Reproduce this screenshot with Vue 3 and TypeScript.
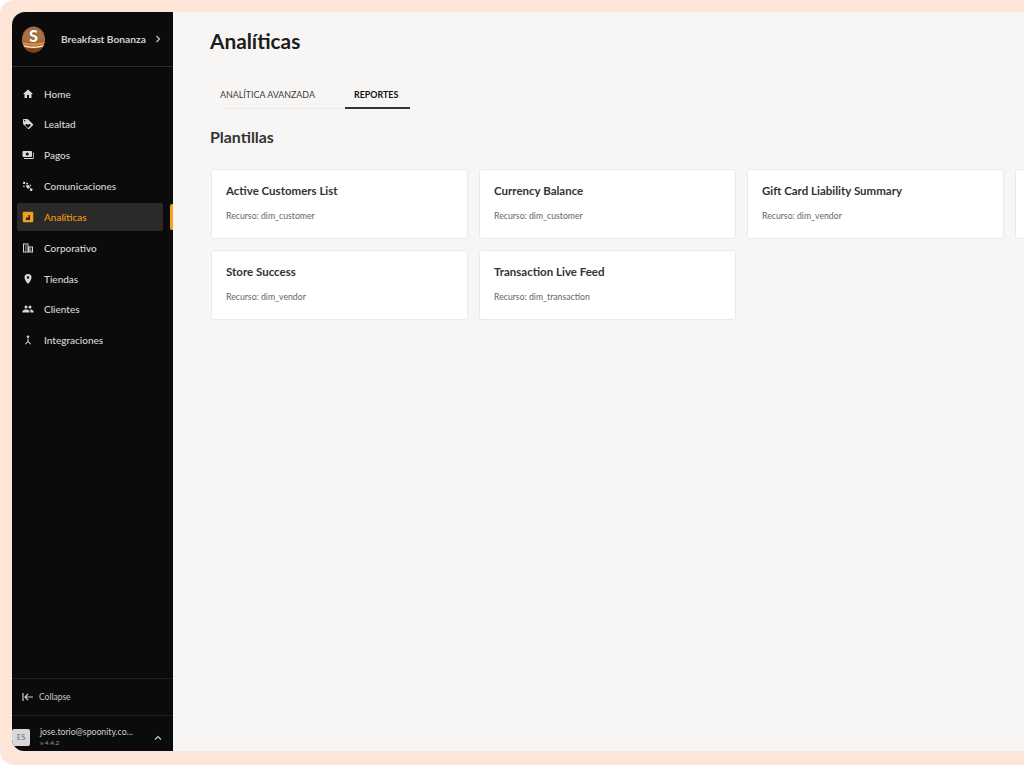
<script setup lang="ts">
interface NavItem { label: string; icon: string; active?: boolean }
interface Report { title: string; source: string }

const navItems: NavItem[] = [
  { label: 'Home', icon: 'home' },
  { label: 'Lealtad', icon: 'tag' },
  { label: 'Pagos', icon: 'pay' },
  { label: 'Comunicaciones', icon: 'comm' },
  { label: 'Analíticas', icon: 'chart', active: true },
  { label: 'Corporativo', icon: 'corp' },
  { label: 'Tiendas', icon: 'pin' },
  { label: 'Clientes', icon: 'people' },
  { label: 'Integraciones', icon: 'merge' },
]

const reports: Report[] = [
  { title: 'Active Customers List', source: 'dim_customer' },
  { title: 'Currency Balance', source: 'dim_customer' },
  { title: 'Gift Card Liability Summary', source: 'dim_vendor' },
  { title: '', source: '' },
  { title: 'Store Success', source: 'dim_vendor' },
  { title: 'Transaction Live Feed', source: 'dim_transaction' },
]
</script>

<template>
  <div class="frame">
    <div class="shell">
      <aside class="sidebar">
        <header class="brand">
          <svg class="logo" viewBox="0 0 26 28" width="25" height="27">
            <ellipse cx="13" cy="14" rx="12" ry="13.500" fill="#a9683a" />
            <path d="M1.200 14a11.900 13 0 0 1 23.600 0z" fill="#a9704a" />
            <path d="M1.300 16c3 2.800 20.400 2.800 23.400 0l-.4 2c-4 2.800-18.600 2.800-22.600 0z" fill="#e8972a" />
            <path d="M2.200 19.200c4.500 2.800 17 2.800 21.600 0l-.9 1.900c-4.500 2.400-15.300 2.400-19.800 0z" fill="#f4ecdf" />
            <path d="M3.600 22c5 1.800 13.800 1.800 18.800 0-2 3.400-5.600 5.500-9.400 5.500S5.600 25.400 3.600 22z" fill="#7a4318" />
            <text x="13" y="16.500" text-anchor="middle" class="logo-s">S</text>
          </svg>
          <span class="brand-name">Breakfast Bonanza</span>
          <svg class="chev" viewBox="0 0 8 8" width="8" height="8"><path d="M2.500 1l3 3-3 3" fill="none" stroke="#ccc" stroke-width="1.100" /></svg>
        </header>

        <nav class="nav">
          <div v-for="item in navItems" :key="item.label" class="nav-row">
            <div class="nav-item" :class="{ active: item.active }">
              <svg class="nav-icon" viewBox="0 0 24 24" width="12" height="12">
                <path v-if="item.icon === 'home'" d="M10 20v-6h4v6h5v-8h3L12 3 2 12h3v8z" />
                <path v-else-if="item.icon === 'tag'" d="M22 12.500l-9.500-9.500C12 2.500 11.500 2 11 2H3.500A1.500 1.500 0 0 0 2 3.500V11c0 .5.300 1 .7 1.400l9 9a2 2 0 0 0 2.800 0l7.500-6.900a2 2 0 0 0 0-2zM5.500 7A1.500 1.500 0 1 1 5.500 4a1.500 1.500 0 0 1 0 3zm11.300 8.300L12 20l-4.800-4.700c-1.500-1.800.9-4.600 3-3l1.800 1 1.800-1c2.100-1.600 4.500 1.200 3 3z" />
                <path v-else-if="item.icon === 'pay'" fill-rule="evenodd" d="M3 4h15a2 2 0 0 1 2 2v8a2 2 0 0 1-2 2H3a2 2 0 0 1-2-2V6a2 2 0 0 1 2-2zm7.500 9a3 3 0 1 0 0-6 3 3 0 0 0 0 6zM22 7h1.500v11a2 2 0 0 1-2 2H4v-1.800h18z" />
                <path v-else-if="item.icon === 'comm'" d="M3 3l4 1.500-1.500 4-4-1.500zM9.500 5l3 1.500-1.500 3-3-1.500zM7 11l6-1 3.500 5-5 2.500zM3 11l2.500 1-1 2.500L2 13.500zM16 9l2.500 1-1 2.500-2.500-1zM17 16l4.500 2-2 4.500-4.500-2z" />
                <path v-else-if="item.icon === 'chart'" fill-rule="evenodd" d="M4 1.500h16A2.500 2.500 0 0 1 22.500 4v16a2.500 2.500 0 0 1-2.500 2.500H4A2.500 2.500 0 0 1 1.500 20V4A2.500 2.500 0 0 1 4 1.500zM8 18h8V8h-3v5H8z" />
                <path v-else-if="item.icon === 'corp'" fill-rule="evenodd" d="M2 3h11v6h9v12H2zm2 2v14h7V5zm11 6v8h5v-8zM6 7h3v2H6zm0 4h3v2H6zm0 4h3v2H6zm10.500-2h2v2h-2zm0 3h2v2h-2z" />
                <path v-else-if="item.icon === 'pin'" d="M12 2a7 7 0 0 0-7 7c0 5.200 7 13 7 13s7-7.800 7-13a7 7 0 0 0-7-7zm0 9.500a2.500 2.500 0 1 1 0-5 2.500 2.500 0 0 1 0 5z" />
                <path v-else-if="item.icon === 'people'" d="M16 11a3 3 0 1 0 0-6 3 3 0 0 0 0 6zm-8 0a3 3 0 1 0 0-6 3 3 0 0 0 0 6zm0 2c-2.300 0-7 1.200-7 3.500V19h14v-2.500C15 14.200 10.300 13 8 13zm8 0h-1c1.200.8 2 1.900 2 3.500V19h6v-2.500c0-2.300-4.700-3.500-7-3.500z" />
                <path v-else d="M12 3a2.500 2.500 0 1 1 0 5 2.500 2.500 0 0 1 0-5zM11 9h2v5l5 6-1.600 1.200L12 16l-4.400 5.200L6 20l5-6z" />
              </svg>
              <span>{{ item.label }}</span>
            </div>
            <i v-if="item.active" class="marker"></i>
          </div>
        </nav>

        <div class="collapse">
          <svg viewBox="0 0 12 10" width="12" height="10"><path d="M1 1v8M11 5H3.500M6 2L3 5l3 3" fill="none" stroke="#ccc" stroke-width="1.200" /></svg>
          <span>Collapse</span>
        </div>

        <footer class="account">
          <span class="lang">ES</span>
          <div class="who">
            <div class="email">jose.torio@spoonity.co...</div>
            <div class="version">v 4.4.2</div>
          </div>
          <svg class="up" viewBox="0 0 8 8" width="8" height="8"><path d="M1 5.500l3-3 3 3" fill="none" stroke="#ccc" stroke-width="1.100" /></svg>
        </footer>
      </aside>

      <main class="main">
        <h1>Analíticas</h1>
        <div class="tabs">
          <div class="tab">ANALÍTICA AVANZADA</div>
          <div class="tab selected">REPORTES</div>
        </div>
        <h2>Plantillas</h2>
        <section class="grid">
          <article v-for="(r, i) in reports" :key="i" class="card">
            <template v-if="r.title">
              <h3>{{ r.title }}</h3>
              <p>Recurso: {{ r.source }}</p>
            </template>
          </article>
        </section>
      </main>
    </div>
  </div>
</template>

<style scoped>
.frame {
  width: 1024px;
  height: 765px;
  box-sizing: border-box;
  padding: 12px 0 14px 12px;
  background: #fde5d8;
  border-radius: 14px 0 0 14px;
  overflow: hidden;
  font-family: "Lato", "Noto Sans", sans-serif;
}
.shell {
  display: flex;
  height: 100%;
  border-radius: 13px 0 0 12px;
  overflow: hidden;
  background: #f7f6f4;
}
.sidebar {
  width: 161px;
  flex: none;
  display: flex;
  flex-direction: column;
  background: #0b0b0b;
  color: #e6e6e6;
}
.brand {
  height: 55px;
  flex: none;
  box-sizing: border-box;
  display: flex;
  align-items: center;
  padding: 0 9px;
  border-bottom: 1px solid #2a2a2a;
}
.logo { flex: none; }
.logo-s {
  font: 900 17px "Lato", sans-serif;
  fill: #fff;
  stroke: #4a2a12;
  stroke-width: 0.500px;
  paint-order: stroke;
}
.brand-name {
  margin-left: 15px;
  font-size: 10.200px;
  font-weight: 700;
  color: #cfcfcf;
  white-space: nowrap;
}
.chev { margin-left: 8.500px; flex: none; }
.nav {
  flex: 1;
  display: flex;
  flex-direction: column;
  gap: 2.850px;
  padding-top: 12.500px;
}
.nav-row {
  position: relative;
  height: 28px;
  padding: 0 10px 0 5px;
}
.nav-item {
  height: 100%;
  display: flex;
  align-items: center;
  padding-left: 5px;
  gap: 10px;
  font-size: 10px;
  font-weight: 500;
  color: #d8d8d8;
  border-radius: 2px;
}
.nav-icon { fill: #d9d9d9; flex: none; }
.nav-item.active {
  background: #2c2a28;
  color: #f09a1e;
}
.nav-item.active .nav-icon { fill: #f0a01f; }
.marker {
  position: absolute;
  right: 0;
  top: 1px;
  width: 3px;
  height: 26px;
  background: #f5a11f;
  border-radius: 2px 0 0 2px;
}
.collapse {
  height: 37px;
  flex: none;
  box-sizing: border-box;
  display: flex;
  align-items: center;
  gap: 5px;
  padding-left: 10px;
  font-size: 8.500px;
  color: #c8c8c8;
  border-top: 1px solid #222;
}
.account {
  height: 36px;
  flex: none;
  box-sizing: border-box;
  display: flex;
  align-items: flex-start;
  border-top: 1px solid #222;
  padding-top: 10px;
}
.lang {
  width: 18px;
  height: 17px;
  margin-top: 3px;
  display: flex;
  align-items: center;
  justify-content: center;
  background: #d8d8d8;
  color: #666;
  font-size: 7.500px;
  border-radius: 2px;
}
.who {
  margin-left: 10px;
  flex: 1;
  min-width: 0;
}
.email {
  font-size: 8.700px;
  line-height: 11px;
  color: #cfcfcf;
  white-space: nowrap;
}
.version {
  font-size: 6.500px;
  line-height: 10px;
  margin-top: 1px;
  color: #999;
}
.up { margin: 8px 11px 0 0; flex: none; }
.main {
  flex: 1;
  min-width: 0;
  padding-left: 37px;
  overflow: hidden;
}
h1 {
  margin: 14px 0 0;
  font-size: 20.800px;
  line-height: 30px;
  font-weight: 700;
  color: #1c1c1c;
}
.tabs {
  display: flex;
  margin: 26px 0 0 10px;
  font-size: 8.900px;
  height: 27px;
}
.tab {
  width: 125px;
  box-sizing: border-box;
  line-height: 25px;
  color: #3c3c3c;
  border-bottom: 1px solid #ececec;
  white-space: nowrap;
}
.tab.selected {
  width: 65px;
  padding-left: 9px;
  font-weight: 700;
  color: #111;
  border-bottom: 2px solid #333;
}
h2 {
  margin: 18px 0 0;
  font-size: 15.900px;
  line-height: 20px;
  font-weight: 700;
  color: #333;
}
.grid {
  display: grid;
  grid-template-columns: repeat(4, 257.500px);
  grid-auto-rows: 70px;
  column-gap: 10.500px;
  row-gap: 11px;
  margin: 22px 0 0 0.500px;
}
.card {
  box-sizing: border-box;
  padding: 14px 14.500px;
  background: #fff;
  border: 1px solid #eaeae8;
  border-radius: 3px;
}
h3 {
  margin: 0;
  font-size: 11.500px;
  line-height: 14px;
  font-weight: 700;
  color: #333;
  white-space: nowrap;
}
p {
  margin: 12px 0 0;
  font-size: 8.700px;
  line-height: 11px;
  color: #666;
}
</style>
